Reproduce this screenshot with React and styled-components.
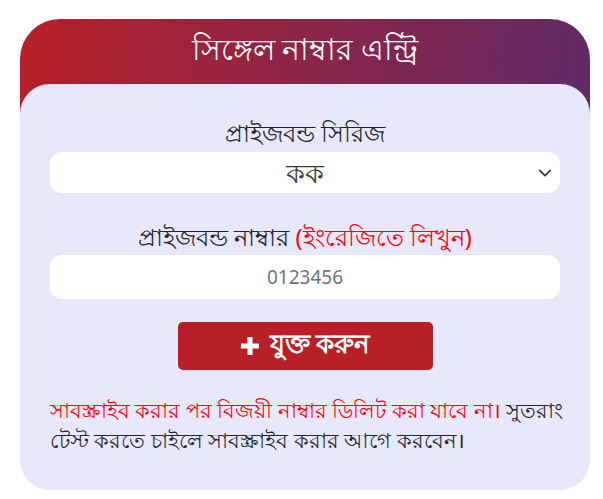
import React from "react";
import styled, { createGlobalStyle } from "styled-components";

const GlobalStyle = createGlobalStyle`
  body {
    margin: 0;
    background: #ffffff;
    font-family: "Noto Sans", "Open Sans", sans-serif;
  }
`;

const Page = styled.div`
  padding: 19px 13px 9px 20px;
`;

const Card = styled.div`
  width: 570px;
`;

const Header = styled.h2`
  margin: 0 0 -30px;
  height: 65px;
  padding-bottom: 30px;
  border-radius: 40px 40px 0 0;
  background: linear-gradient(100deg, #b82027 0%, #8c2548 50%, #5f2a66 100%);
  display: flex;
  align-items: center;
  justify-content: center;
  color: #ffffff;
  font-size: 30px;
  font-weight: 500;
`;

const Body = styled.div`
  position: relative;
  background: #e8e8fd;
  border-radius: 30px;
  padding: 34px 30px 35px 30px;
  display: flex;
  flex-direction: column;
`;

const Field = styled.div`
  display: flex;
  flex-direction: column;
  align-items: stretch;
  margin-bottom: ${(p) => p.$gap || 0}px;
`;

const Label = styled.label`
  text-align: center;
  font-size: 23.5px;
  color: #212529;
  line-height: 30px;
  margin-bottom: ${(p) => p.$space || 4}px;
`;

const Red = styled.span`
  color: #ff0000;
`;

const SelectWrap = styled.div`
  position: relative;
`;

const Select = styled.select`
  width: 100%;
  height: 41px;
  border: none;
  border-radius: 12px;
  background: #ffffff;
  text-align: center;
  text-align-last: center;
  font-family: inherit;
  font-size: 27px;
  color: #343a40;
  appearance: none;
  outline: none;
`;

const Chevron = styled.svg`
  position: absolute;
  right: 8px;
  top: 14px;
  pointer-events: none;
`;

const Input = styled.input`
  width: 100%;
  box-sizing: border-box;
  height: 44px;
  border: none;
  border-radius: 12px;
  background: #ffffff;
  text-align: center;
  font-family: inherit;
  font-size: 19px;
  outline: none;
  &::placeholder {
    color: #6c757d;
  }
`;

const Button = styled.button`
  align-self: center;
  width: 255px;
  height: 48px;
  border: none;
  border-radius: 5px;
  background: #b82025;
  color: #ffffff;
  font-family: inherit;
  font-size: 26px;
  font-weight: 600;
  display: flex;
  align-items: center;
  justify-content: center;
  gap: 10px;
  margin-top: 23px;
`;

const Note = styled.p`
  margin: 25px -12px 0 0;
  font-size: 21px;
  line-height: 30px;
  color: #212529;
`;

export default function App() {
  return (
    <>
      <GlobalStyle />
      <Page>
        <Card>
          <Header>সিঙ্গেল নাম্বার এন্ট্রি</Header>
          <Body>
            <Field $gap={29}>
              <Label>প্রাইজবন্ড সিরিজ</Label>
              <SelectWrap>
                <Select defaultValue="কক">
                  <option>কক</option>
                </Select>
                <Chevron width="14" height="14" viewBox="0 0 16 16">
                  <path
                    d="M2 5l6 6 6-6"
                    fill="none"
                    stroke="#343a40"
                    strokeWidth="2"
                    strokeLinecap="round"
                    strokeLinejoin="round"
                  />
                </Chevron>
              </SelectWrap>
            </Field>
            <Field>
              <Label $space={3}>
                প্রাইজবন্ড নাম্বার <Red>(ইংরেজিতে লিখুন)</Red>
              </Label>
              <Input placeholder="0123456" />
            </Field>
            <Button>
              <svg width="20" height="20" viewBox="0 0 20 20">
                <path d="M7.5 1h5v6.5H19v5h-6.5V19h-5v-6.5H1v-5h6.5z" fill="#fff" />
              </svg>
              যুক্ত করুন
            </Button>
            <Note>
              <Red>সাবস্ক্রাইব করার পর বিজয়ী নাম্বার ডিলিট করা যাবে না।</Red> সুতরাং
              টেস্ট করতে চাইলে সাবস্ক্রাইব করার আগে করবেন।
            </Note>
          </Body>
        </Card>
      </Page>
    </>
  );
}
